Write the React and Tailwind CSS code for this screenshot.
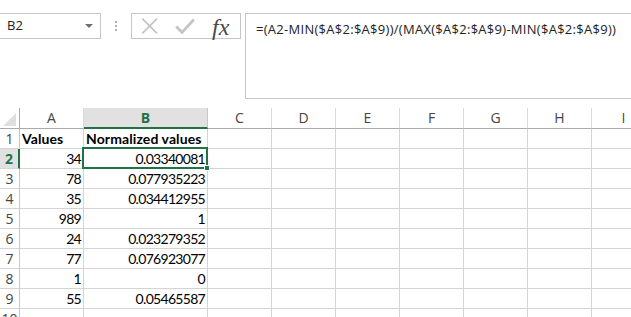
import React from "react";

const COLS = ["A", "B", "C", "D", "E", "F", "G", "H", "I"];
const WIDTHS = ["w-[64px]", "w-[124px]", "w-[64px]", "w-[64px]", "w-[64px]", "w-[64px]", "w-[64px]", "w-[64px]", "w-[64px]"];

const DATA = [
  ["Values", "Normalized values"],
  ["34", "0.03340081"],
  ["78", "0.077935223"],
  ["35", "0.034412955"],
  ["989", "1"],
  ["24", "0.023279352"],
  ["77", "0.076923077"],
  ["1", "0"],
  ["55", "0.05465587"],
  ["", ""],
];

const cellFont = { fontFamily: "Lato, 'Open Sans', sans-serif" };

export default function App() {
  return (
    <div className="w-[631px] h-[317px] overflow-hidden bg-white relative" style={{ fontFamily: "'Open Sans', 'Noto Sans', sans-serif" }}>
      {/* Formula bar */}
      <div className="flex items-start pt-[13px] h-[108px]">
        <div className="ml-[-1px] w-[102px] h-[26px] border border-[#c6c6c6] flex items-center justify-between pl-[7px] pr-[7px] shrink-0">
          <span className="text-[13px] text-[#222]">B2</span>
          <div className="w-0 h-0 border-l-[4px] border-r-[4px] border-t-[4px] border-l-transparent border-r-transparent border-t-[#6e6e6e]" />
        </div>
        <div className="w-[30px] h-[26px] flex flex-col items-center justify-center gap-[2px] shrink-0">
          <div className="w-[2px] h-[2px] bg-[#b0b0b0]" />
          <div className="w-[2px] h-[2px] bg-[#b0b0b0]" />
          <div className="w-[2px] h-[2px] bg-[#b0b0b0]" />
        </div>
        <div className="w-[110px] h-[26px] border border-[#c6c6c6] flex items-center shrink-0 relative">
          <svg width="110" height="24" viewBox="0 0 110 24">
            <path d="M10.5 4.5 L25.5 19.5 M25.5 4.5 L10.5 19.5" stroke="#c3c3c3" strokeWidth="1.6" fill="none" />
            <path d="M45 12.5 L51 18.5 L63 5.5" stroke="#c6c6c6" strokeWidth="3" fill="none" strokeLinejoin="miter" />
          </svg>
          <span className="absolute left-[80px] top-[1px] text-[24px] italic text-[#4a4a4a] leading-none" style={{ fontFamily: "'Liberation Serif', serif" }}>fx</span>
        </div>
        <div className="ml-[4px] flex-1 h-[86px] border-t border-b border-l border-[#c6c6c6] pl-[10px] pt-[2px]">
          <span className="text-[13px] text-[#222] whitespace-nowrap tracking-[0.28px]">=(A2-MIN($A$2:$A$9))/(MAX($A$2:$A$9)-MIN($A$2:$A$9))</span>
        </div>
      </div>

      {/* Grid */}
      <div className="flex flex-col">
        {/* Header row */}
        <div className="flex h-[21px] shrink-0">
          <div className="w-[20px] h-[21px] shrink-0 border-r border-b border-[#ababab] relative bg-white">
            <div className="absolute right-[3px] bottom-[2px] w-0 h-0" style={{ borderRight: "13px solid #dfdfdf", borderTop: "13px solid transparent", borderLeft: "0", borderBottom: "0" }} />
          </div>
          {COLS.map((c, i) => (
            <div
              key={c}
              className={`${WIDTHS[i]} h-[21px] shrink-0 flex items-center justify-center text-[14px] ${
                c === "B"
                  ? "bg-[#e1e1e1] border-r border-r-[#c6c6c6] border-b-2 border-b-[#217346] text-[#217346] font-bold"
                  : "border-r border-r-[#dadada] border-b border-b-[#ababab] text-[#444]"
              }`}
            >
              <span className="leading-none">{c}</span>
            </div>
          ))}
        </div>
        {DATA.map((row, r) => {
          const num = r + 1;
          const sel = num === 2;
          return (
            <div key={r} className="flex h-[20px] shrink-0">
              <div
                className={`w-[20px] h-[20px] shrink-0 border-b border-b-[#d4d4d4] flex items-center justify-center text-[14px] ${
                  sel
                    ? "bg-[#e1e1e1] border-r-2 border-r-[#217346] text-[#217346] font-bold"
                    : "border-r border-r-[#c6c6c6] text-[#444]"
                }`}
              >
                <span className="leading-none">{num}</span>
              </div>
              {COLS.map((c, i) => {
                let content = "";
                if (i === 0) content = row[0];
                if (i === 1) content = row[1];
                const isHeader = r === 0;
                return (
                  <div
                    key={c}
                    className={`${WIDTHS[i]} h-[20px] shrink-0 border-r border-b border-[#d4d4d4] flex items-end pb-[1px] px-[2px] text-black leading-none relative ${
                      isHeader ? "justify-start font-bold text-[14px] tracking-[0.1px]" : "justify-end text-[14px] tracking-[-0.7px]"
                    }`}
                    style={cellFont}
                  >
                    <span className="leading-[17px]">{content}</span>
                    {sel && i === 1 && (
                      <div className="absolute left-[-2px] top-[-2px] w-[126px] h-[22px] border-2 border-[#217346] z-10">
                        <div className="absolute right-[-4px] bottom-[-4px] w-[6px] h-[6px] bg-[#217346] border border-white" />
                      </div>
                    )}
                  </div>
                );
              })}
            </div>
          );
        })}
      </div>
    </div>
  );
}
